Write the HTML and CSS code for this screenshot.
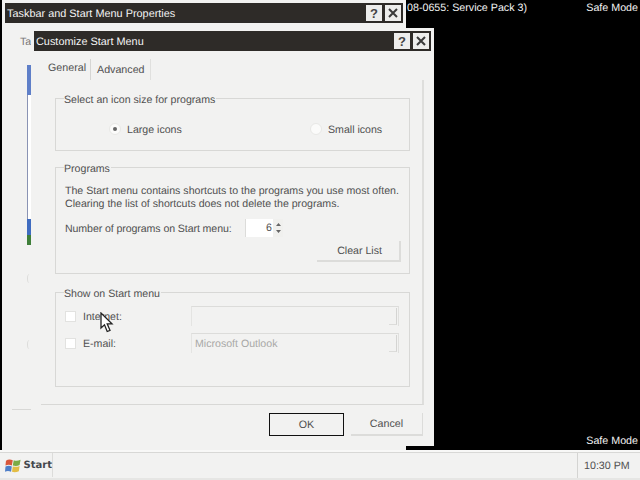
FILE: index.html
```html
<!DOCTYPE html>
<html lang="en">
<head>
<meta charset="utf-8">
<title>Customize Start Menu</title>
<link rel="stylesheet" href="styles.css">
</head>
<body>
<main class="desktop">
  <div class="desk-row top-row"><span class="build">08-0655: Service Pack 3)</span><span>Safe Mode</span></div>
  <div class="desk-row"><span>Safe Mode</span></div>

  <section class="window back-window">
    <header class="titlebar">
      <span class="title">Taskbar and Start Menu Properties</span>
      <span class="tb-btn">?</span>
      <span class="tb-btn"><svg width="10" height="10" viewBox="0 0 10 10"><path d="M1 1L9 9M9 1L1 9" stroke="#3a3a3a" stroke-width="2"/></svg></span>
    </header>
    <div class="back-body">
      <div class="back-tab">Ta</div>
      <div class="preview"><div class="preview-top"></div><div class="preview-mid"></div><div class="preview-blue"></div><div class="preview-green"></div></div>
      <div class="ghost ghost-a"></div>
      <div class="ghost ghost-b"></div>
      <div class="back-line"></div>
    </div>
  </section>

  <section class="window front-window">
    <header class="titlebar">
      <span class="title">Customize Start Menu</span>
      <span class="tb-btn">?</span>
      <span class="tb-btn"><svg width="10" height="10" viewBox="0 0 10 10"><path d="M1 1L9 9M9 1L1 9" stroke="#3a3a3a" stroke-width="2"/></svg></span>
    </header>
    <div class="tabs">
      <span class="tab tab-active">General</span>
      <span class="tab tab-idle">Advanced</span>
    </div>
    <div class="pane">
      <div class="group group-size">
        <div class="legend">Select an icon size for programs</div>
        <div class="radio-row">
          <span class="option"><span class="radio radio-on"></span>Large icons</span>
          <span class="option"><span class="radio"></span>Small icons</span>
        </div>
      </div>
      <div class="group group-programs">
        <div class="legend">Programs</div>
        <p class="desc">The Start menu contains shortcuts to the programs you use most often.<br>Clearing the list of shortcuts does not delete the programs.</p>
        <div class="count-row">
          <span class="count-label">Number of programs on Start menu:</span>
          <span class="spinner"><span class="spin-value">6</span><span class="spin-arrows">
            <svg width="7" height="12" viewBox="0 0 7 12"><path d="M3.5 1L6 4H1zM3.5 11L1 8H6z" fill="#666"/></svg></span></span>
        </div>
        <div class="clear-row"><span class="btn btn-clear">Clear List</span></div>
      </div>
      <div class="group group-show">
        <div class="legend">Show on Start menu</div>
        <div class="show-row first-row">
          <span class="check"></span><span class="show-label">Internet:</span>
          <span class="combo"><span class="combo-arrow"></span></span>
        </div>
        <div class="show-row">
          <span class="check"></span><span class="show-label">E-mail:</span>
          <span class="combo">Microsoft Outlook<span class="combo-arrow"></span></span>
        </div>
      </div>
    </div>
    <div class="actions">
      <span class="btn btn-ok">OK</span>
      <span class="btn btn-cancel">Cancel</span>
    </div>
  </section>

  <svg class="cursor" width="14" height="21" viewBox="0 0 14 21"><path d="M1 1V16L4.5 12.8L7.2 19.5L10 18.3L7.2 11.8H12Z" fill="#fff" stroke="#222" stroke-width="1.3" stroke-linejoin="miter"/></svg>
</main>
<footer class="taskbar">
  <div class="start">
    <svg width="17" height="17" viewBox="0 0 17 17"><path d="M1 3.5Q4 1.5 8 3L7 8.5Q4 7 0.5 8.5Z" fill="#d9573a"/><path d="M9 3Q12 4.5 16 2.5L15 8Q12 9.5 8 8.5Z" fill="#7bab45"/><path d="M0.5 9.5Q4 8 7 9.5L6.2 15Q3 13.5 0 15Z" fill="#4f7fc8"/><path d="M8 9.5Q12 10.5 15 9L14.2 14.5Q10.5 16 7.2 15Z" fill="#e3bd45"/></svg>
    <span>Start</span>
  </div>
  <div class="tray">10:30 PM</div>
</footer>
</body>
</html>
```
FILE: styles.css
```css
* { box-sizing: border-box; }
html, body { margin: 0; height: 100%; overflow: hidden; }
body {
  width: 640px; height: 480px; display: flex; flex-direction: column;
  font-family: "Liberation Sans", Arial, sans-serif; font-size: 10.7px; text-rendering: geometricPrecision; color: #505050; background: #000;
}
.desktop {
  position: relative; height: 450px; background: #000; color: #f4f4f4;
  display: flex; flex-direction: column; justify-content: space-between; padding: 1px 2px 2px 0;
}
.desk-row { display: flex; justify-content: flex-end; line-height: 14px; white-space: nowrap; }
.top-row { justify-content: space-between; padding-left: 407px; }
.window { position: absolute; background: #f2f2f1; padding: 3px; color: #505050; white-space: nowrap; }
.back-window { left: 2px; top: 0; width: 404px; height: 450px; }
.front-window { left: 31px; top: 28px; width: 403px; height: 418px; }
.titlebar { display: flex; align-items: center; height: 20px; background: #2e2b28; padding: 0 2px; gap: 3px; color: #f4f4f4; }
.title { flex: 1; line-height: 20px; padding-top: 1px; font-size: 10.9px; }
.tb-btn {
  width: 16px; height: 16px; background: #ededec; color: #444; font-weight: bold; font-size: 13px;
  display: flex; align-items: center; justify-content: center;
}
.back-body { padding: 12px 0 0 15px; }
.back-tab { line-height: 14px; color: #777; }
.preview { width: 5px; margin: 16px 0 0 7px; height: 180px; border-left: 1px solid #8a93b4; display: flex; flex-direction: column; }
.preview-top { height: 30px; background: #5f7fc8; margin-left: -1px; }
.preview-mid { flex: 1; background: #fff; }
.preview-blue { height: 16px; background: #3f6cc0; margin-left: -1px; }
.preview-green { height: 10px; background: #3f7f3a; margin-left: -1px; }
.ghost { width: 5px; height: 9px; border-left: 1px solid #dcdcda; border-radius: 50%; margin-left: 7px; }
.ghost-a { margin-top: 29px; }
.ghost-b { margin-top: 57px; }
.back-line { width: 20px; border-top: 1px solid #d8d8d6; margin: 60px 0 0 -8px; }

.tabs { display: flex; height: 29px; padding: 8px 0 0 11px; }
.tab { line-height: 15px; }
.tab-active { width: 46px; padding: 2px 0 0 3px; border-right: 1px solid #d6d6d4; height: 21px; }
.tab-idle { width: 60px; padding: 4px 0 0 6px; border-right: 1px solid #e0e0de; height: 21px; }
.pane {
  margin-left: 7px; width: 383px; height: 325px; padding: 18px 12px 0 14px;
  border-right: 2px solid #dededc; border-bottom: 1px solid #d8d8d6; font-size: 10.6px;
  display: flex; flex-direction: column; gap: 16px;
}
.group { border: 1px solid #d8d8d6; padding: 0 9px; }
.legend { width: fit-content; margin: -6px 0 0 -1px; height: 14px; line-height: 14px; background: #f2f2f1; padding-right: 1px; }
.group-size { height: 53px; }
.group-programs { height: 107px; }
.group-show { height: 95px; margin-top: 2px; }
.radio-row { display: flex; padding: 16px 0 0 44px; line-height: 14px; }
.option { display: flex; align-items: center; }
.option:first-child { width: 201px; }
.radio { width: 12px; height: 12px; margin: -2px 6px 0 0; border-radius: 50%; background: #fbfbfa; border: 1px solid #e8e8e6; display: flex; align-items: center; justify-content: center; }
.radio-on::after { content: ""; width: 4px; height: 4px; border-radius: 50%; background: #666; }
.desc { margin: 9px 0 0; line-height: 13px; }
.count-row { display: flex; align-items: center; margin-top: 8px; height: 18px; }
.count-label { width: 180px; padding-top: 2px; letter-spacing: -0.09px; }
.spinner { display: flex; width: 38px; height: 18px; background: #fff; border-left: 1px solid #dcdcda; }
.spin-value { flex: 1; text-align: right; line-height: 18px; padding-right: 1px; }
.spin-arrows { width: 10px; background: #f0f0ee; display: flex; align-items: center; justify-content: center; }
.clear-row { display: flex; justify-content: flex-end; margin: 4px -1px 0 0; }
.btn { display: flex; align-items: center; justify-content: center; height: 22px; background: #f2f2f1; }
.btn-clear { width: 84px; height: 21px; padding-left: 3px; border-right: 2px solid #dcdcda; border-bottom: 2px solid #dcdcda; }
.show-row { display: flex; align-items: center; height: 20px; margin-top: 7px; }
.first-row { margin-top: 5px; }
.check { width: 11px; height: 11px; background: #fff; border: 1px solid #e2e2e0; }
.show-label { width: 115px; padding: 2px 0 0 7px; }
.combo { position: relative; width: 208px; height: 20px; line-height: 20px; padding-left: 3px; color: #a8a8a6; border-top: 1px solid #dcdcda; border-left: 1px solid #e4e4e2; border-right: 1px solid #e0e0de; }
.combo-arrow { position: absolute; right: 1px; top: 1px; width: 8px; height: 17px; border-right: 1px solid #d4d4d2; border-bottom: 1px solid #dcdcda; }
.actions { display: flex; justify-content: flex-end; gap: 7px; padding: 8px 8px 0 0; }
.btn-ok { width: 75px; height: 23px; border: 1px solid #111; }
.btn-cancel { width: 72px; height: 23px; border-right: 1px solid #dcdcda; border-bottom: 2px solid #dcdcda; }
.cursor { position: absolute; left: 100px; top: 312px; }

.taskbar { height: 30px; background: #f2f2f1; border-top: 2px solid #f8f8f7; display: flex; align-items: stretch; justify-content: space-between; padding: 1px 0 2px; box-shadow: inset 0 1px 0 #d8d8d6, inset 0 -2px 0 #e6e6e4; }
.start { margin-left: 2px; width: 51px; height: 24px; display: flex; align-items: center; gap: 2px; padding-left: 3px; font-family: "DejaVu Sans", sans-serif; font-weight: bold; color: #44484c; font-size: 10px; border-right: 1px solid #dcdcda; }
.tray { width: 63px; height: 25px; display: flex; align-items: center; padding-left: 6px; border-left: 1px solid #d4d4d2; }
```
